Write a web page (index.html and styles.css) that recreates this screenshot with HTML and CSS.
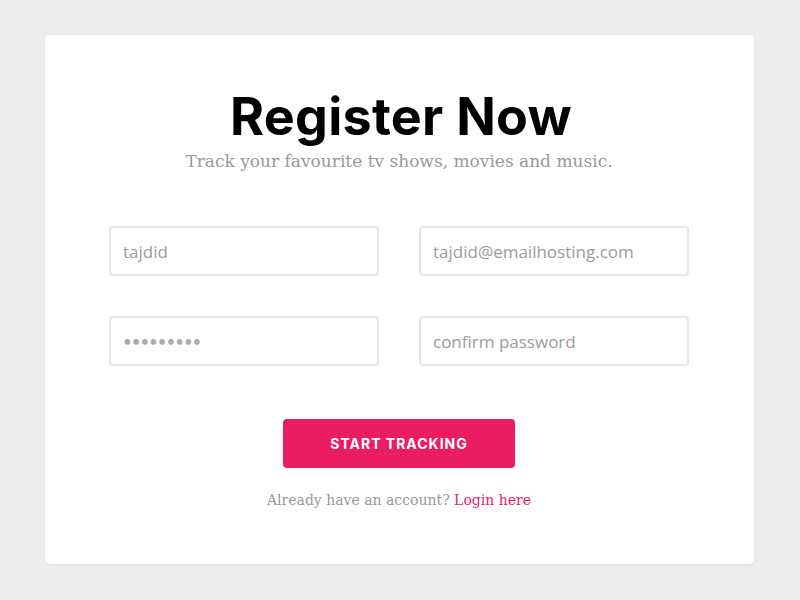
FILE: index.html
```html
<!DOCTYPE html>
<html>
<head>
<meta charset="utf-8">
<link rel="stylesheet" href="styles.css">
</head>
<body>
<div class="card">
  <h1 class="title">Register Now</h1>
  <p class="subtitle">Track your favourite tv shows, movies and music.</p>
  <form class="form">
    <div class="grid">
      <input class="field" type="text" placeholder="tajdid">
      <input class="field" type="text" placeholder="tajdid@emailhosting.com">
      <input class="field pw" type="password" value="123456789">
      <input class="field" type="password" placeholder="confirm password">
    </div>
    <button class="btn" type="button">START TRACKING</button>
  </form>
  <p class="footer">Already have an account? <a class="link" href="#">Login here</a></p>
</div>
</body>
</html>
```
FILE: styles.css
```css
html, body { margin: 0; padding: 0; }
body {
  background: #ededed;
  width: 800px;
  height: 600px;
  padding-top: 35px;
  box-sizing: border-box;
  font-family: "Open Sans", sans-serif;
}
.card {
  margin-left: 45px;
  width: 709px;
  height: 529px;
  background: #fff;
  border-radius: 5px;
  box-shadow: 0 1px 3px rgba(0,0,0,0.06);
  box-sizing: border-box;
  padding: 52px 65px 0 64px;
  display: flex;
  flex-direction: column;
  align-items: center;
}
.title {
  margin: 0 0 0 4px;
  font-family: "Inter", sans-serif;
  font-weight: 700;
  font-size: 52px;
  line-height: 60px;
  letter-spacing: 0.3px;
  color: #000;
}
.subtitle {
  margin: 2px 0 0;
  font-family: "DejaVu Serif", serif;
  font-size: 17px;
  line-height: 24px;
  color: #999;
}
.form {
  margin-top: 53px;
  display: flex;
  flex-direction: column;
  align-items: center;
}
.grid {
  display: grid;
  grid-template-columns: 270px 270px;
  column-gap: 40px;
  row-gap: 40px;
}
.field {
  width: 270px;
  height: 50px;
  box-sizing: border-box;
  border: 2px solid #e6e6e6;
  border-radius: 4px;
  padding: 0 12px;
  font-family: "Open Sans", sans-serif;
  font-size: 17px;
  color: #aaa;
  outline: none;
  background: #fff;
}
.field.pw { font-family: "Lato", sans-serif; font-size: 15px; color: #aaa; }
.field::placeholder { color: #9c9c9c; }
.btn {
  margin-top: 53px;
  width: 232px;
  height: 49px;
  border: none;
  border-radius: 4px;
  background: #ea1d62;
  color: #fff;
  font-family: "Inter", sans-serif;
  font-weight: 700;
  font-size: 14px;
  letter-spacing: 1px;
}
.footer {
  margin: 24px 0 0;
  font-family: "DejaVu Serif", serif;
  font-size: 14px;
  color: #999;
}
.link { color: #ea1d62; text-decoration: none; }
```
